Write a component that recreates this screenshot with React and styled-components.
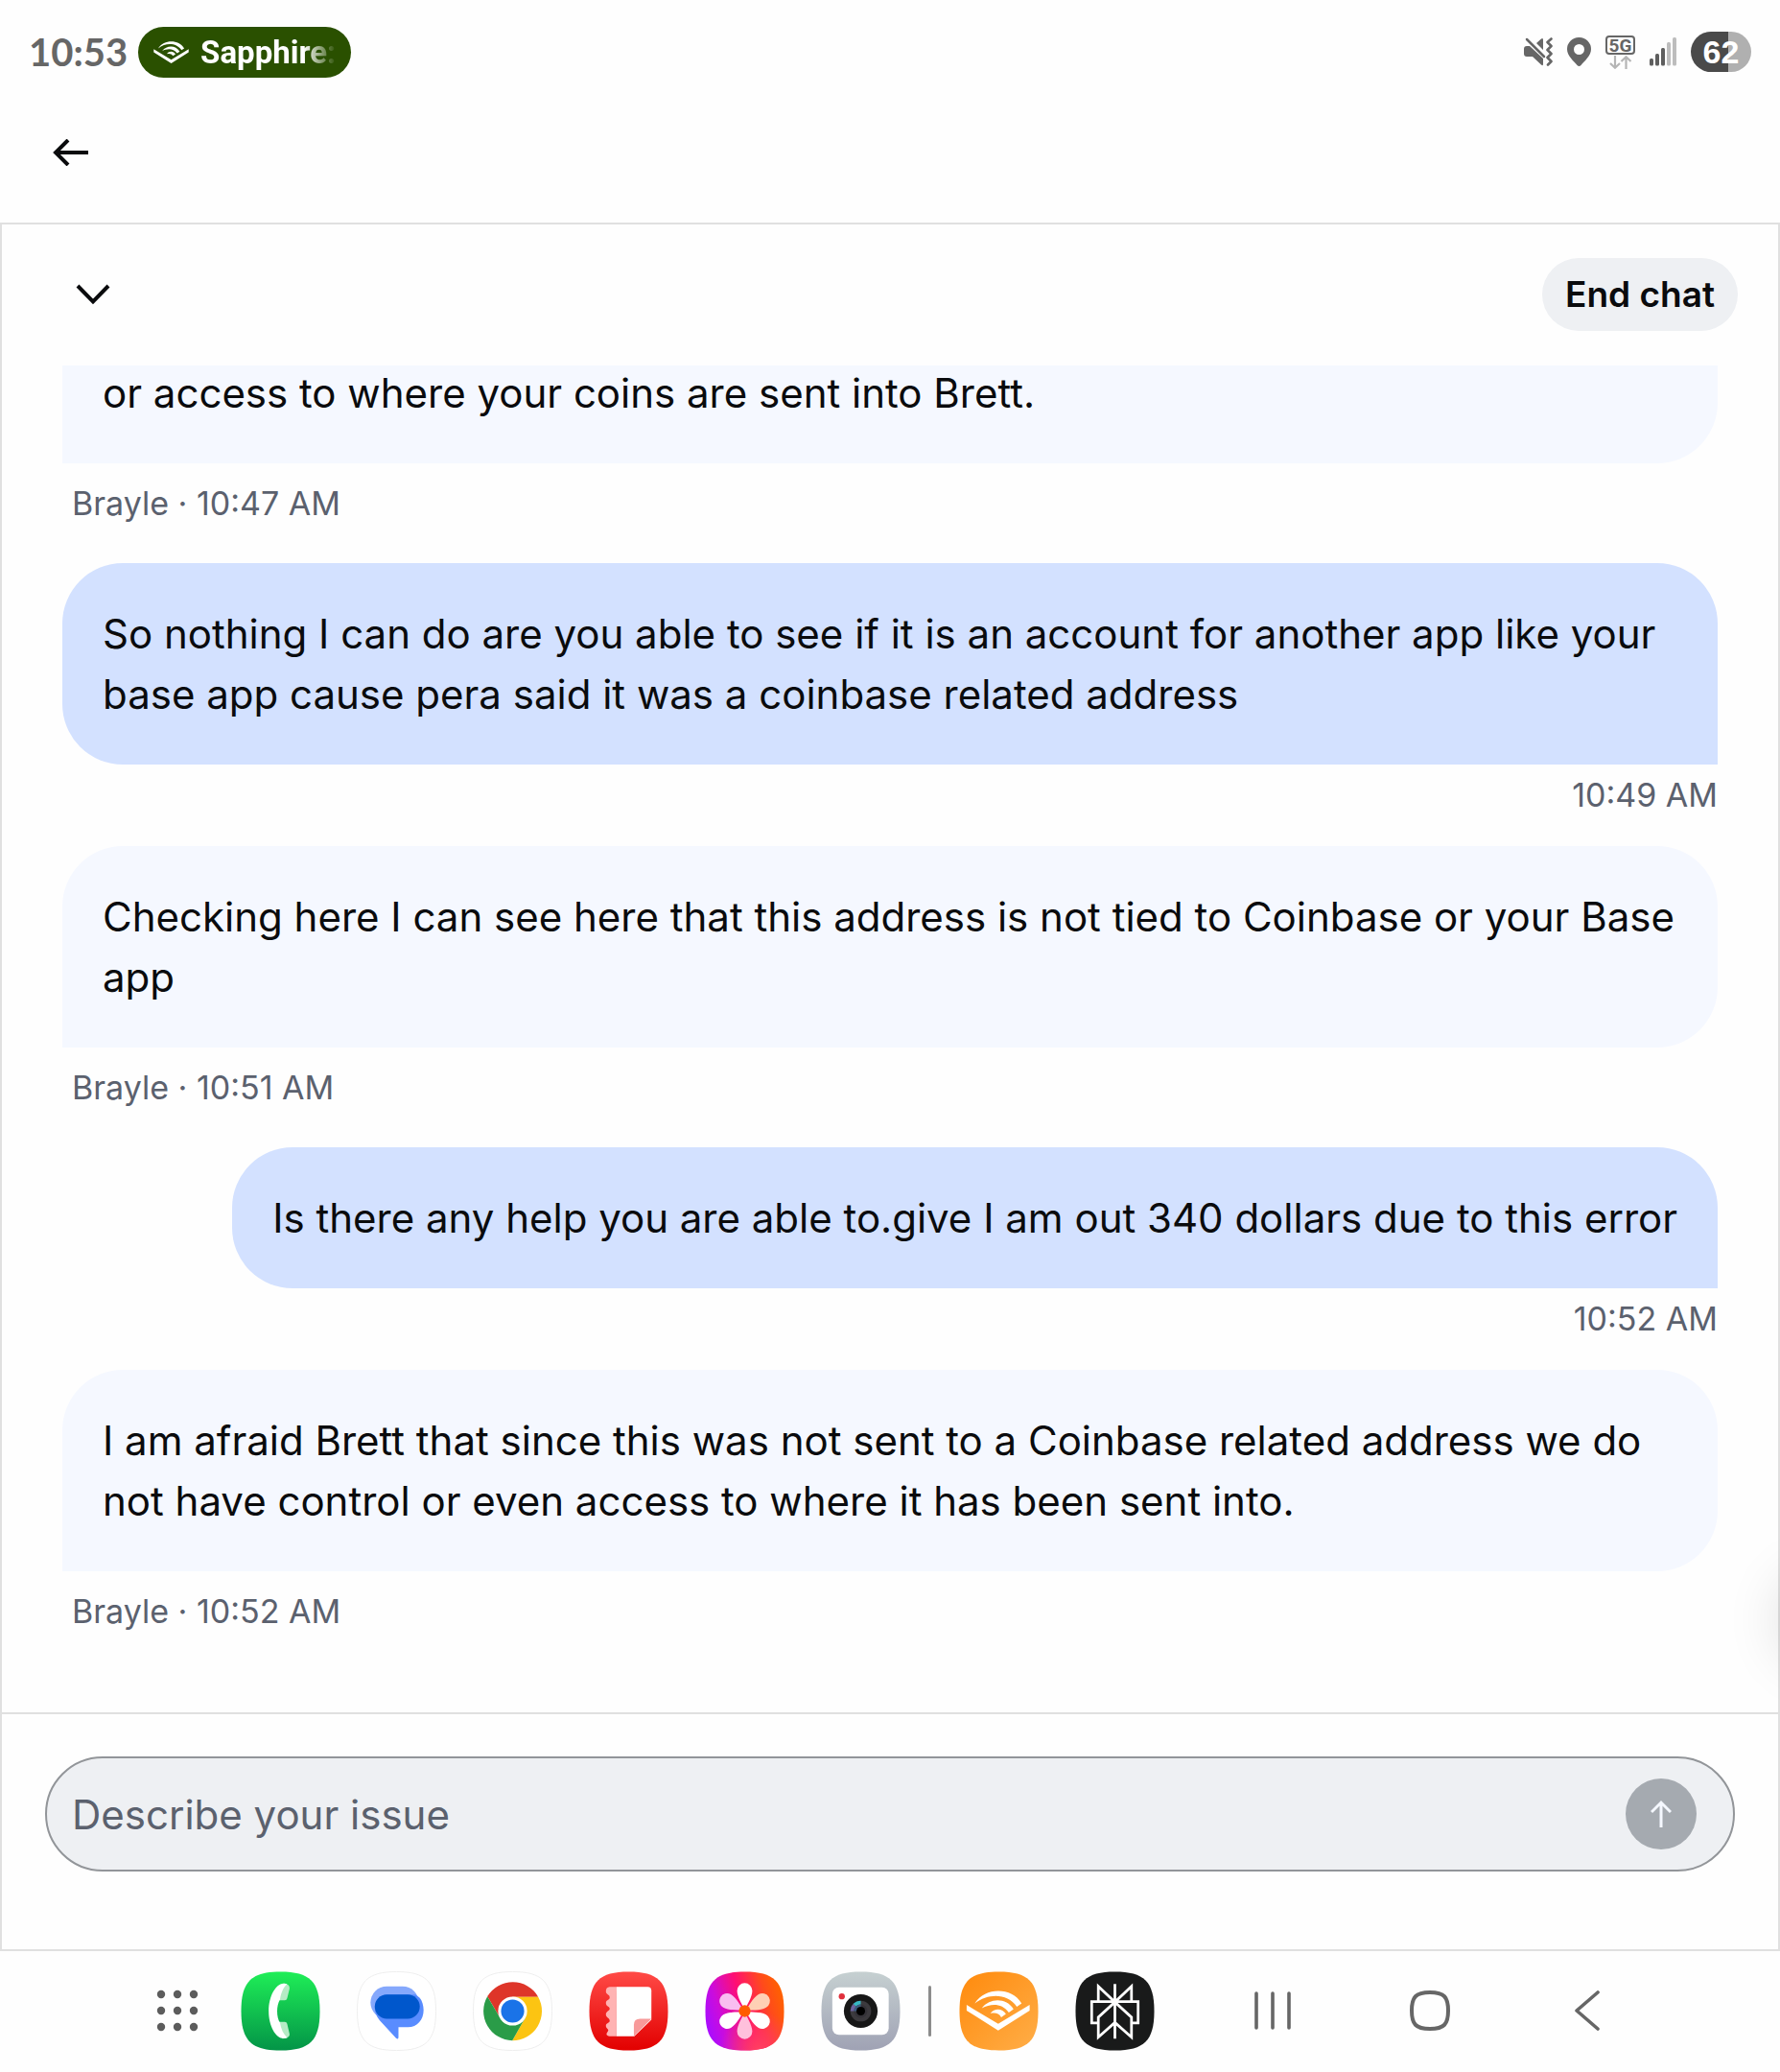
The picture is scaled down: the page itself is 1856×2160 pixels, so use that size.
import React, { useState } from 'react';
import styled, { createGlobalStyle } from 'styled-components';

const GlobalStyle = createGlobalStyle`
  * {
    box-sizing: border-box;
  }

  body {
    margin: 0;
    background: #fefefe;
    color: #0a0b0d;
    font-family: Inter, "Liberation Sans", sans-serif;
    overflow: hidden;
  }

  button {
    border: 0;
    padding: 0;
    background: none;
    color: inherit;
    font: inherit;
    cursor: pointer;
  }

  svg {
    display: block;
    flex-shrink: 0;
  }
`;

const Screen = styled.div`
  position: relative;
  display: flex;
  flex-direction: column;
  height: 100vh;
  overflow: hidden;
`;

/* status bar */

const StatusBar = styled.header`
  display: flex;
  align-items: center;
  justify-content: space-between;
  height: 108px;
  padding: 0 30px;
`;

const StatusGroup = styled.div`
  display: flex;
  align-items: center;
  gap: ${props => props.$gap}px;
`;

const Clock = styled.time`
  color: #666;
  font-family: Lato, Inter, sans-serif;
  font-size: 40px;
  font-weight: 700;
`;

const NowPlaying = styled.button`
  display: flex;
  align-items: center;
  gap: 12px;
  width: 222px;
  height: 53px;
  padding: 0 12px 0 16px;
  border-radius: 27px;
  background: #2a5000;
  color: #fff;
`;

const TrackName = styled.span`
  flex: 1;
  font-family: Roboto, sans-serif;
  font-size: 33px;
  font-weight: 700;
  text-align: left;
  white-space: nowrap;
  mask-image: linear-gradient(to right, #000 74%, transparent 98%);
`;

const Network = styled.div`
  display: flex;
  flex-direction: column;
  align-items: center;
  gap: 1px;
`;

const NetworkLabel = styled.span`
  width: 31px;
  height: 20px;
  border: 2px solid #666;
  border-radius: 4px;
  color: #666;
  font-family: Roboto, sans-serif;
  font-size: 19px;
  font-weight: 700;
  line-height: 17px;
  text-align: center;
`;

const Battery = styled.span`
  width: 63px;
  height: 42px;
  border-radius: 21px;
  background: linear-gradient(to right, #4a4a4a 62%, #b0b0b0 62%);
  color: #fff;
  font-family: "Liberation Sans", sans-serif;
  font-size: 34px;
  font-weight: 700;
  line-height: 42px;
  text-align: center;
`;

const NavBar = styled.nav`
  display: flex;
  align-items: center;
  height: 124px;
  padding: 0 49px 22px;
`;

const IconButton = styled.button`
  display: flex;
  align-items: center;
  justify-content: center;
  width: 50px;
  height: 50px;
`;

/* chat */

const Panel = styled.main`
  display: flex;
  flex: 1;
  flex-direction: column;
  min-height: 0;
  border: 2px solid #e0e0e0;
`;

const Toolbar = styled.div`
  display: flex;
  align-items: center;
  justify-content: space-between;
  height: 147px;
  padding: 0 42px 2px 70px;
`;

const EndChat = styled.button`
  height: 76px;
  padding: 0 24px;
  border-radius: 38px;
  background: #eef0f3;
  font-size: 37px;
  font-weight: 600;
`;

const MessageList = styled.div`
  display: flex;
  flex: 1;
  flex-direction: column;
  justify-content: flex-end;
  min-height: 0;
  padding: 0 63px 43px;
  overflow: hidden;
`;

const Message = styled.article`
  display: flex;
  flex-direction: column;
  flex-shrink: 0;
  align-items: ${props => (props.$mine ? 'flex-end' : 'flex-start')};
  padding-bottom: ${props => (props.$mine ? 32 : 41)}px;
`;

const Bubble = styled.p`
  width: ${props => (props.$continued ? '100%' : 'auto')};
  margin: 0;
  padding: 42px;
  border-radius: ${props => (props.$continued ? '0 0 63px 0' : props.$mine ? '63px 63px 0 63px' : '63px 63px 63px 0')};
  background: ${props => (props.$mine ? '#d3e1ff' : '#f5f8ff')};
  font-size: 42px;
  line-height: 63px;
`;

const Meta = styled.span`
  padding: ${props => (props.$mine ? '11px 0 0' : '21px 0 0 10px')};
  color: #5b616e;
  font-size: 34px;
  line-height: 42px;
`;

const Composer = styled.form`
  padding: 44px 45px 81px;
  border-top: 2px solid #e0e0e0;
`;

const InputShell = styled.div`
  display: flex;
  align-items: center;
  height: 120px;
  padding: 0 38px 0 26px;
  border: 2px solid #929599;
  border-radius: 60px;
  background: #eef0f3;
`;

const IssueInput = styled.input`
  flex: 1;
  min-width: 0;
  border: 0;
  padding: 0;
  outline: 0;
  background: none;
  color: #0a0b0d;
  font: inherit;
  font-size: 42px;

  &::placeholder {
    color: #5b616e;
    opacity: 1;
  }
`;

const SendButton = styled.button`
  display: flex;
  align-items: center;
  justify-content: center;
  width: 74px;
  height: 74px;
  border-radius: 50%;
  background: #a5aab0;
`;

/* shadow of the edge panel handle parked outside the screen */
const EdgeHandle = styled.div`
  position: absolute;
  right: -88px;
  bottom: 430px;
  width: 84px;
  height: 84px;
  border-radius: 50%;
  box-shadow: 0 0 60px 4px rgba(0, 0, 0, 0.14);
  pointer-events: none;
`;

/* taskbar */

const Taskbar = styled.footer`
  display: flex;
  align-items: center;
  justify-content: center;
  height: 126px;
  padding-bottom: 2px;
`;

const Launcher = styled.button`
  display: flex;
  justify-content: center;
  width: 132px;
`;

const Apps = styled.div`
  display: flex;
  gap: 38px;
`;

const Divider = styled.span`
  width: 3px;
  height: 53px;
  margin: 0 29px;
  border-radius: 2px;
  background: #8c8c8c;
`;

const SystemNav = styled.nav`
  display: flex;
  margin-left: 41px;
`;

const SystemButton = styled.button`
  display: flex;
  align-items: center;
  justify-content: center;
  width: 164px;
  height: 84px;
`;

const SQUIRCLE = 'M42 .5C73 .5 83.500 11 83.500 42S73 83.500 42 83.500.5 73 .5 42 11 .5 42 .5Z';

const AppIcon = ({ name, fill, stroke, children }) => (
  <button type="button" aria-label={name}>
    <svg width="83" height="83" viewBox="0 0 84 84">
      <path d={SQUIRCLE} fill={fill} stroke={stroke} />
      {children}
    </svg>
  </button>
);

const Gradient = ({ id, from, to }) => (
  <linearGradient id={id} x1="0" y1="0" x2="0" y2="1">
    <stop offset="0" stopColor={from} />
    <stop offset="1" stopColor={to} />
  </linearGradient>
);

const AudibleMark = () => (
  <>
    <path d="M8 35.500 41.300 55.500 74.500 35.500V41.500L41.300 62.500 8 41.500Z" />
    <path d="M16.500 34C28 16 56 17 66 34L61 37.500C51 23 31 23 16.500 34Z" />
    <path d="M24 39C33 27.500 50 28 57.500 40L52.500 43.500C45 33.500 34 34 24 39Z" />
    <path d="M33 44.500C38 38 46 39.500 49.500 45L44.500 48.500C42 44 38 43.500 33 44.500Z" />
  </>
);

const PhoneIcon = () => (
  <AppIcon name="Phone" fill="url(#phone)">
    <defs><Gradient id="phone" from="#1fee57" to="#039447" /></defs>
    <path d="M44 13C49 12.500 52 15 51.500 18.500L49 28.500Q48.500 30.500 46.500 30.500H39ZM39 53.500H46.500Q48.500 53.500 49 55.500L51.500 66C52 69 49 71 44 71Z" fill="#b5ebc5" />
    <path d="M49 13.500C39 9.500 29.500 24 29.500 42S39 74.500 49 70C45 66.500 42.500 61 41.500 54.500 37.500 48 37.500 36 41.500 29.500 42.500 23 45 17 49 13.500Z" fill="#fff" />
  </AppIcon>
);

const MessagesIcon = () => (
  <AppIcon name="Messages" fill="#fff" stroke="#eee">
    <rect x="14.500" y="16" width="51" height="34" rx="17" fill="#85a8fc" />
    <path d="M19 38C19 30 25 24.500 32 24.500H62L66.500 28C69 31 70.500 36 70.500 41 70.500 51 64 59 54 59H44V69.500Q44 72.500 41.500 70.500L24 51.500C20.500 47.500 19 43 19 38Z" fill="#598cff" />
    <rect x="19" y="24.500" width="47.500" height="25.500" rx="12.700" fill="#0057cc" />
  </AppIcon>
);

const ChromeIcon = () => (
  <AppIcon name="Chrome" fill="#fff" stroke="#eee">
    <g transform="translate(42 42)">
      <path d="M-26.600-15.500A31 31 0 0 1 27-15H0L-13 7.500Z" fill="#de3529" />
      <path d="M27-15A31 31 0 0 1-.3 31L13 7.500 0-15Z" fill="#fcc412" />
      <path d="M-.3 31A31 31 0 0 1-26.600-15.500L-13 7.500 13 7.500Z" fill="#2a9c48" />
      <circle r="15.300" fill="#fff" />
      <circle r="12.200" fill="#1a73e8" />
    </g>
  </AppIcon>
);

const NotesIcon = () => (
  <AppIcon name="Notes" fill="url(#notes)">
    <defs><Gradient id="notes" from="#ff4a46" to="#e20000" /></defs>
    <path d="M29 16.500H22Q18 17 18 21C18 25 22 24 22 27.500S18 29.500 18 33.500 22 37 22 39.500 18 42 18 45.500 22 49 22 52 18 54 18 57.500 22 61 20 63.500 18 68 22 68.500H29Z" fill="#ffb3b3" />
    <path d="M29 16.500H62Q66 16.500 66 20.500V51L48 68.500H29Z" fill="#fff" />
    <path d="M66 50H54Q47.500 50 47.500 56.500V68.500Z" fill="#f89a9a" />
  </AppIcon>
);

const PETALS = ['#fff', '#ffd0b5', '#fff', '#ffc0dc', '#fff', '#f9bdf0'];

const GalleryIcon = () => (
  <AppIcon name="Gallery" fill="url(#gallery)">
    <defs>
      <linearGradient id="gallery" x1="0" y1=".65" x2="1" y2=".35">
        <stop offset="0" stopColor="#a90dff" />
        <stop offset=".2" stopColor="#cb0cdc" />
        <stop offset=".5" stopColor="#ff0f72" />
        <stop offset=".8" stopColor="#ff4a1c" />
        <stop offset="1" stopColor="#ff6200" />
      </linearGradient>
      <radialGradient id="galleryGlow" cx=".68" cy="1" r=".5">
        <stop offset="0" stopColor="#ff4060" />
        <stop offset="1" stopColor="#ff4060" stopOpacity="0" />
      </radialGradient>
    </defs>
    <path d={SQUIRCLE} fill="url(#galleryGlow)" />
    {PETALS.map((color, i) => (
      <path key={i} d="M42 42C40.500 36 34 28 34 20.500A8 8 0 0 1 50 20.500C50 28 43.500 36 42 42Z" fill={color} transform={`rotate(${i * 60} 42 42)`} />
    ))}
    <circle cx="42" cy="42" r="6.200" fill="#ff5c00" />
  </AppIcon>
);

const CameraIcon = () => (
  <AppIcon name="Camera" fill="url(#camera)">
    <defs><Gradient id="camera" from="#c6d0d1" to="#9fa2b4" /></defs>
    <rect x="12" y="17" width="59.500" height="50" rx="7" fill="#fff" />
    <circle cx="22" cy="26.500" r="3.200" fill="#e0303c" />
    <circle cx="42" cy="42" r="17.800" fill="#171717" />
    <circle cx="42" cy="42" r="11" fill="#3c3a3e" />
    <path d="M42 42V31A11 11 0 0 0 34 34.500Z" fill="#36b9c4" />
    <path d="M42 42 34 34.500A11 11 0 0 0 31 42Z" fill="#6c63a0" />
    <circle cx="42" cy="42" r="7" fill="#343238" />
    <path d="M42 42V35A7 7 0 0 0 35 42Z" fill="#3b5d80" />
    <circle cx="42" cy="42" r="4.600" fill="#000" />
  </AppIcon>
);

const AudibleIcon = () => (
  <AppIcon name="Audible" fill="url(#audible)">
    <defs>
      <linearGradient id="audible" x1="0" y1="0" x2="1" y2="1">
        <stop offset="0" stopColor="#ff8a0c" />
        <stop offset="1" stopColor="#ffae48" />
      </linearGradient>
    </defs>
    <g fill="#fff"><AudibleMark /></g>
  </AppIcon>
);

const PerplexityIcon = () => (
  <AppIcon name="Perplexity" fill="#191a1a">
    <path
      d="M42 13.500V71M24.500 32V16L42 32.500 59.500 16V32M24.500 54.500H17.500V32H66.500V54.500H59.500M42 32.500 24.500 48.500V69.500L42 54 59.500 69.500V48.500Z"
      fill="none"
      stroke="#fff"
      strokeWidth="2.800"
    />
  </AppIcon>
);

const MESSAGES = [
  { text: 'or access to where your coins are sent into Brett.', from: 'Brayle', time: '10:47 AM', continued: true },
  { text: 'So nothing I can do are you able to see if it is an account for another app like your base app cause pera said it was a coinbase related address', time: '10:49 AM' },
  { text: 'Checking here I can see here that this address is not tied to Coinbase or your Base app', from: 'Brayle', time: '10:51 AM' },
  { text: 'Is there any help you are able to.give I am out 340 dollars due to this error', time: '10:52 AM' },
  { text: 'I am afraid Brett that since this was not sent to a Coinbase related address we do not have control or even access to where it has been sent into.', from: 'Brayle', time: '10:52 AM' },
];

const StatusIcons = () => (
  <StatusGroup $gap={15}>
    <svg width="30" height="30" viewBox="0 0 30 30" fill="#666">
      <path d="M0 12Q0 9 3 9H6L20 22V28Q20 30 18 28.500L9 20H3Q0 20 0 17ZM13 6 18 1.500Q20 0 20 2.500V13Z" />
      <path d="M3 2 21 20" stroke="#666" strokeWidth="2.500" strokeLinecap="round" />
      <path d="M28.500 1.500 24.500 5 28.500 9 24.500 13 28.500 17 24.500 21 28.500 25 25 28.500" fill="none" stroke="#666" strokeWidth="2.600" strokeLinecap="round" strokeLinejoin="round" />
    </svg>
    <svg width="25" height="30" viewBox="0 0 25 30" fill="#666">
      <path fillRule="evenodd" d="M12.500 0A12.300 12.300 0 0 0 0 12.300C0 19 7 25 10.500 29Q12.500 31 14.500 29C18 25 25 19 25 12.300A12.300 12.300 0 0 0 12.500 0ZM12.500 7A5.500 5.500 0 1 1 12.500 18 5.500 5.500 0 0 1 12.500 7Z" />
    </svg>
    <Network>
      <NetworkLabel>5G</NetworkLabel>
      <svg width="24" height="14" viewBox="0 0 24 14" fill="none" stroke="#b5b5b5" strokeWidth="2.200">
        <path d="M6 0V12.500M1 8 6 12.700 11 8M17.500 14V1.500M12.500 6 17.500 1.300 22.500 6" />
      </svg>
    </Network>
    <svg width="28" height="30" viewBox="0 0 28 30">
      <g fill="#5e5e5e">
        <rect x="0" y="22" width="4" height="7.500" rx="1.500" />
        <rect x="6" y="17" width="4" height="12.500" rx="1.500" />
        <rect x="12" y="11" width="4" height="18.500" rx="1.500" />
      </g>
      <g fill="#bdbdbd">
        <rect x="18" y="5" width="4" height="24.500" rx="1.500" />
        <rect x="24" y="0" width="4" height="29.500" rx="1.500" />
      </g>
    </svg>
    <Battery>62</Battery>
  </StatusGroup>
);

const App = () => {
  const [issue, setIssue] = useState('');

  return (
    <Screen>
      <GlobalStyle />
      <StatusBar>
        <StatusGroup $gap={11}>
          <Clock>10:53</Clock>
          <NowPlaying type="button">
            <svg width="37" height="23" viewBox="8 20.500 66.500 42" fill="#fff"><AudibleMark /></svg>
            <TrackName>Sapphire:</TrackName>
          </NowPlaying>
        </StatusGroup>
        <StatusIcons />
      </StatusBar>

      <NavBar>
        <IconButton type="button" aria-label="Back">
          <svg width="38" height="28" viewBox="0 0 38 28" fill="none" stroke="#0a0b0d" strokeWidth="4">
            <path d="M37 14H3M16 1 3 14 16 27" />
          </svg>
        </IconButton>
      </NavBar>

      <Panel>
        <Toolbar>
          <IconButton type="button" aria-label="Minimize chat">
            <svg width="36" height="22" viewBox="0 0 36 22" fill="none" stroke="#0a0b0d" strokeWidth="4">
              <path d="M2 2 18 18.500 34 2" />
            </svg>
          </IconButton>
          <EndChat type="button">End chat</EndChat>
        </Toolbar>

        <MessageList>
          {MESSAGES.map(({ text, from, time, continued }, i) => (
            <Message key={i} $mine={!from}>
              <Bubble $mine={!from} $continued={continued}>{text}</Bubble>
              <Meta $mine={!from}>{from ? `${from} · ${time}` : time}</Meta>
            </Message>
          ))}
        </MessageList>

        <Composer onSubmit={e => e.preventDefault()}>
          <InputShell>
            <IssueInput
              aria-label="Describe your issue"
              placeholder="Describe your issue"
              value={issue}
              onChange={e => setIssue(e.target.value)}
            />
            <SendButton type="submit" aria-label="Send">
              <svg width="22" height="30" viewBox="0 0 22 30" fill="none" stroke="#f5f8ff" strokeWidth="3">
                <path d="M11 29V3M1 13 11 3 21 13" />
              </svg>
            </SendButton>
          </InputShell>
        </Composer>
      </Panel>

      <Taskbar>
        <Launcher type="button" aria-label="All apps">
          <svg width="44" height="44" viewBox="0 0 44 44" fill="#5c5c5c">
            {[5, 22, 39].map(y => [5, 22, 39].map(x => <circle key={`${x}-${y}`} cx={x} cy={y} r="4.200" />))}
          </svg>
        </Launcher>
        <Apps>
          <PhoneIcon />
          <MessagesIcon />
          <ChromeIcon />
          <NotesIcon />
          <GalleryIcon />
          <CameraIcon />
        </Apps>
        <Divider />
        <Apps>
          <AudibleIcon />
          <PerplexityIcon />
        </Apps>
        <SystemNav>
          <SystemButton type="button" aria-label="Recents">
            <svg width="38" height="42" viewBox="0 0 38 42" stroke="#666" strokeWidth="3.600" strokeLinecap="round">
              <path d="M2 3V39M19 3V39M36 3V39" />
            </svg>
          </SystemButton>
          <SystemButton type="button" aria-label="Home">
            <svg width="42" height="42" viewBox="0 0 42 42" fill="none" stroke="#666" strokeWidth="4">
              <path d="M21 2C36 2 40 7 40 21S36 40 21 40 2 35 2 21 6 2 21 2Z" />
            </svg>
          </SystemButton>
          <SystemButton type="button" aria-label="Back">
            <svg width="28" height="42" viewBox="0 0 28 42" fill="none" stroke="#666" strokeWidth="3.600" strokeLinecap="round" strokeLinejoin="round">
              <path d="M25 2 3 21 25 40" />
            </svg>
          </SystemButton>
        </SystemNav>
      </Taskbar>

      <EdgeHandle />
    </Screen>
  );
};

export default App;
